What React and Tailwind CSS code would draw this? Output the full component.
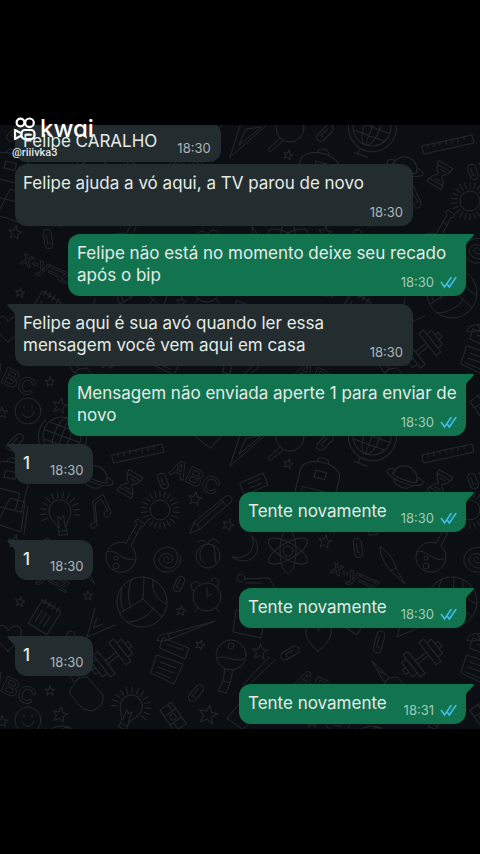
import React from 'react';
import clsx from 'clsx';

const messages = [
  { id: 1, text: 'Felipe CARALHO', time: '18:30', short: true },
  { id: 2, text: 'Felipe ajuda a vó aqui, a TV parou de novo', time: '18:30' },
  { id: 3, text: 'Felipe não está no momento deixe seu recado após o bip', time: '18:30', mine: true, tail: true },
  { id: 4, text: 'Felipe aqui é sua avó quando ler essa mensagem você vem aqui em casa', time: '18:30', tail: true },
  { id: 5, text: 'Mensagem não enviada aperte 1 para enviar de novo', time: '18:30', mine: true, tail: true },
  { id: 6, text: '1', time: '18:30', short: true, tail: true },
  { id: 7, text: 'Tente novamente', time: '18:30', short: true, mine: true, tail: true },
  { id: 8, text: '1', time: '18:30', short: true, tail: true },
  { id: 9, text: 'Tente novamente', time: '18:30', short: true, mine: true, tail: true },
  { id: 10, text: '1', time: '18:30', short: true, tail: true },
  { id: 11, text: 'Tente novamente', time: '18:31', short: true, mine: true, tail: true },
];

// x, y, radius, rotation
const stars = [
  [195, 79, 7, 10], [228, 105, 6, 20], [50, 271, 5, 0], [60, 295, 8, 12], [181, 191, 5, 8],
  [200, 225, 5, 20], [88, 176, 5, 0], [20, 182, 5, 10], [208, 295, 10, 12], [260, 232, 8, 5],
  [288, 44, 5, 15], [15, 122, 7, 10], [2, 302, 6, 0],
];

// x, y, length, rotation
const clips = [
  [163, 61, 16, -20], [179, 164, 16, 25], [196, 273, 19, 40], [290, 233, 20, 60],
  [48, 128, 19, -8], [15, 22, 20, 45], [69, 222, 22, 15],
];

const StarShape = () => (
  <path d="M0-10 2.6-3.4 9.5-3.1 4.1 1.3 5.9 8.1 0 4.2-5.9 8.1-4.1 1.3-9.5-3.1-2.6-3.4Z" vectorEffect="non-scaling-stroke" />
);

const Rays = ({ inner, outer, count, from = 0, sweep = 360 }) => (
  <>
    {Array.from({ length: count }, (_, i) => (
      <path key={i} d={`M0 ${-inner}V${-outer}`} transform={`rotate(${from + (i * sweep) / count})`} />
    ))}
  </>
);

const Bulb = ({ x, y, rotate }) => (
  <g transform={`translate(${x} ${y}) rotate(${rotate})`}>
    <path d="M-4 23V15C-5 11-11 7-11-1A11 11 0 0 1 11-1C11 7 5 11 4 15V23ZM-3 15V4L0 7 3 4V15M-4 19H4" />
    <Rays inner={14} outer={20} count={13} from={-108} sweep={234} />
  </g>
);

const Doodles = () => (
  <g id="doodles">
    {stars.map(([x, y, r, a]) => (
      <g key={`${x}-${y}`} transform={`translate(${x} ${y}) rotate(${a}) scale(${r / 10})`}><StarShape /></g>
    ))}
    {clips.map(([x, y, l, a]) => (
      <g key={`${x}-${y}`} transform={`translate(${x} ${y}) rotate(${a})`}>
        <rect x="-4" y={-l / 2} width="8" height={l} rx="4" />
        <path d={`M-1 ${-l / 4}V${l / 4}M1 ${l / 4}V${l / 5}`} />
      </g>
    ))}

    {/* globe */}
    <g transform="translate(62 16) rotate(20)">
      <circle r="19" />
      <ellipse rx="8" ry="19" />
      <path d="M0-19V19M-19 0H19M-16-9H16M-16 9H16M-21-10A24 24 0 1 0 16-18M-4 24V29M-8 30H6" />
    </g>

    {/* ruler */}
    <path d="M112 35 162 24 164 32 114 43ZM118 34V37M124 33V36M130 31V34M136 30V33M142 29V32M148 28V31M154 26V29" />

    {/* planet */}
    <g transform="translate(95 57) rotate(20)">
      <path d="M-12 0A12 11 0 0 1 12 0M-10 6A12 11 0 0 0 10 6" />
      <path d="M-12-4C-26-2-18 6 0 6S26-2 12-4M-12-1C-16 1-10 3 0 3S16 1 12-1" />
    </g>

    {/* hourglass */}
    <g transform="translate(130 64) rotate(30)">
      <path d="M-8-12H8V-8H-8ZM-8 8H8V12H-8ZM-7-8C-7-2-2-2-2 0S-7 2-7 8M7-8C7-2 2-2 2 0S7 2 7 8M-3-5H3M-3 5H3" />
    </g>

    {/* sun */}
    <g transform="translate(160 90)">
      <circle r="10" />
      <Rays inner={13} outer={19} count={22} />
    </g>

    {/* pencil */}
    <path d="M190 113 194 102 226 76C229 74 234 79 231 82L200 109ZM194 102 200 109M221 80 227 86M197 104 224 81" />

    {/* music note */}
    <path d="M93 81 103 74 111 92C111 98 104 99 104 94 104 91 107 91 108 91L101 79 95 84 97 104C96 110 89 109 91 104L95 102Z" />

    {/* flask */}
    <g transform="translate(120 137)">
      <path d="M6-14 17-33 15-36 18-38 25-33 23-30 21-31 11-11A15 15 0 1 1 6-14ZM-13-5C-5-10 3 6 14 2M13-26 17-23" />
      <circle cx="-4" cy="1" r="2" />
      <circle cx="-4" cy="9" r="3" />
    </g>

    {/* spiral */}
    <path transform="translate(167 139)" d="M2 0C2-3-3-3-3 1S5 5 6 0-3-8-7-2-2 10 4 9 13-4 8-9-8-12-12-4-9 12-2 13M-2 13C9 14 16 4 13-4" />

    {/* apple */}
    <g transform="translate(208 136)">
      <circle r="12" />
      <path d="M-4-10C-10-5-9 3-4 7M4-11C9-6 6 2 8 7M-10-14C-6-18-3-15 0-12M0-12C2-19 8-18 11-13" />
    </g>

    <Bulb x={60} y={92} rotate={-8} />
    <Bulb x={131} y={287} rotate={22} />

    {/* smiley */}
    <g transform="translate(28 300)">
      <circle r="13" />
      <path d="M-6 2C-4 8 4 8 6 1M-4-5V-3M4-5V-3" />
    </g>

    {/* volleyball */}
    <g transform="translate(142 182)">
      <circle r="25" />
      <path d="M1-3 2-25M1-3-22 11M1-3 20 15M-10-23C-15-14-14-2-11 6M11-22C10-14 12-4 24 2M-15 20C-5 20 8 14 11 6M-20-14C-22-6-22 2-18 9" />
    </g>

    {/* alarm clock */}
    <g transform="translate(207 177)">
      <circle r="14" />
      <path d="M0-9V0L5-3M-13-6C-20-10-14-20-7-13M4-15C5-23 16-18 10-10M-9 11-12 15M9 11 12 15" />
    </g>

    {/* paint brush */}
    <path d="M157 220C158 215 164 213 168 214L215 201 170 219C166 221 160 222 157 220ZM168 214 170 219" />

    {/* notebook */}
    <g transform="translate(45 197) rotate(32)">
      <path d="M-11-13H11V14H-11ZM-8-16V-10M-3-16V-10M2-16V-10M7-16V-10M-6-4V9M-1-4V9M4-4V9" />
    </g>

    {/* set squares */}
    <path d="M95 188 87 217 115 205M97 198 93 208 103 204M230 46 241 12 272 9ZM239 34 246 18 261 16Z" />

    {/* dumbbell */}
    <g transform="translate(112 238) rotate(-38)">
      <path d="M-7-2H7V2H-7ZM-13-14H-7V14H-13ZM-19-9H-13V9H-19ZM7-14H13V14H7ZM13-9H19V9H13ZM-23-3H-19V3H-23ZM19-3H23V3H19Z" />
    </g>

    {/* notes */}
    <path d="M163 218 189 228 185 239 160 228ZM167 224 183 230M157 235 183 244 174 264 151 253ZM160 242 176 248M158 247 174 253M156 252 170 258" />

    {/* glue bottle */}
    <path d="M71 268 79 258 87 257 103 275C104 285 97 289 92 291L83 289 70 274ZM62 241 74 262 79 258ZM67 250 75 254" />

    {/* eraser */}
    <g transform="translate(173 297) rotate(55)">
      <path d="M-13-7H13V7H-13ZM-5-7V7M5-7V7M-13-3H-5M5 3H13" />
      <circle r="3" />
    </g>

    {/* ping pong paddle */}
    <g transform="translate(231 235)">
      <circle r="15" />
      <circle cy="-9" r="3" />
      <path d="M-14 3C-6-1 4 8 13 4M-6 14-8 26-13 36-5 38-1 28 2 15M-8 26-1 28" />
    </g>

    {/* boxes and books */}
    <path d="M236 190 233 212 261 218 264 200ZM227 298 240 283 256 297 243 309ZM194 15 204 1 226 10 211 28ZM201 13C202 6 207 6 207 13L213 8" />
    <path d="M240 63 263 53 268 65 245 75ZM248 64 260 59M250 68 262 63M0 98 10 78 25 82 21 112 0 105M28 86 24 114" />

    {/* magnifier */}
    <circle cx="290" cy="17" r="14" />
    <path d="M280 27 268 38 270 41 283 30" />

    {/* backpack */}
    <g transform="translate(8 62) rotate(14)">
      <path d="M-20 26V-8C-20-24 20-24 20-8V26ZM-6-20C-6-26 6-26 6-20M-5-11H6V-4H-5ZM-14 26V8H14V26" />
    </g>

    {/* moon */}
    <path d="M252 116C266 128 252 150 232 137 246 140 257 130 252 116Z" />

    {/* atom */}
    <g transform="translate(288 131)">
      <circle r="5" />
      <ellipse rx="8" ry="22" />
      <ellipse rx="8" ry="22" transform="rotate(60)" />
      <ellipse rx="8" ry="22" transform="rotate(120)" />
    </g>

    {/* pen */}
    <path d="M70 127C77 130 84 140 86 148L95 164 81 151C75 145 70 135 70 127ZM81 151 86 148" />

    {/* heart */}
    <path d="M8 231C-4 222-8 208 0 206 5 204 8 209 8 211 10 207 18 203 21 209 23 217 16 225 8 231Z" />

    {/* scissors */}
    <circle cx="241" cy="158" r="4" />
    <path d="M245 159 269 158 275 168M246 163 262 163M243 265 270 236M252 262 275 240" />

    <g strokeWidth="0.8" className="font-['Liberation_Sans'] text-[24px] font-bold">
      <text transform="translate(168 53) rotate(26)">ABC</text>
      <text transform="translate(-16 263) rotate(26)">ABC</text>
      <text transform="translate(20 152) rotate(24)" className="text-[20px]">x-y=z</text>
    </g>
  </g>
);

const Wallpaper = () => (
  <svg aria-hidden="true" className="absolute inset-0 h-full w-full" fill="none" stroke="#23272a" strokeWidth="1" strokeLinecap="round" strokeLinejoin="round">
    <defs>
      <pattern id="wallpaper" x="0" y="295" width="310" height="309" patternUnits="userSpaceOnUse">
        <Doodles />
        <use href="#doodles" x="310" />
        <use href="#doodles" x="-310" />
        <use href="#doodles" y="309" />
        <use href="#doodles" y="-309" />
      </pattern>
    </defs>
    <rect width="100%" height="100%" fill="url(#wallpaper)" stroke="none" />
  </svg>
);

const Tail = ({ mine }) => (
  <svg
    aria-hidden="true"
    viewBox="0 0 20 12"
    className={clsx('absolute top-0 h-3 w-5', mine ? '-right-2 text-[#11744e]' : '-left-2 -scale-x-100 text-[#232d2f]')}
  >
    <path fill="currentColor" d="M0 0H18.5Q20.5 0 19.5 1.8L13 8.5Q12 10 12 12H0Z" />
  </svg>
);

const Ticks = () => (
  <svg role="img" aria-label="Lida" viewBox="0 0 17 13" className="h-[13px] w-[17px]" fill="none" stroke="#3fb9e4" strokeWidth="1.7">
    <path d="M1 6 4.5 11 11.5 1M7 8 9.3 11 16.2 1" />
  </svg>
);

const Message = ({ text, time, mine, short, tail }) => (
  <li className={clsx('flex', mine ? 'justify-end' : 'justify-start')}>
    <div
      className={clsx(
        'relative max-w-full rounded-xl pt-2 pb-1.5',
        mine ? 'bg-[#11744e] px-[9px]' : 'bg-[#232d2f] pr-2.5 pl-2',
        short ? 'flex items-end justify-between' : 'grid min-h-[62px] w-[398px]',
        short && (mine ? 'min-w-[227px] gap-2' : 'gap-5'),
        tail && (mine ? 'rounded-tr-none' : 'rounded-tl-none')
      )}
    >
      {tail && <Tail mine={mine} />}
      <p className={clsx('relative mb-1 text-[17px] leading-[22px] text-[#e4ebe9]', !short && 'col-start-1 row-start-1', text === '1' && 'font-medium')}>
        {text}
      </p>
      <div className={clsx('relative flex items-center gap-1.5 text-[13px] leading-4', !short && 'col-start-1 row-start-1 self-end justify-self-end', mine ? 'text-[#a3c7b7]' : 'text-[#aeb5b7]')}>
        <time>{time}</time>
        {mine && <Ticks />}
      </div>
    </div>
  </li>
);

const Watermark = () => (
  <div className="absolute top-[117px] left-3 text-white">
    <div className="flex items-center gap-1">
      <svg aria-hidden="true" viewBox="0 0 24 24" className="h-6 w-6" fill="none" stroke="currentColor" strokeWidth="2.2" strokeLinejoin="round">
        <circle cx="8.5" cy="5.5" r="3.9" />
        <circle cx="17.5" cy="5.8" r="4.3" />
        <rect x="9.5" y="13" width="13" height="9" rx="3.5" />
        <path d="M9.5 16.5 3 13V22L9.5 18.5M13.5 17.5H18.5" />
      </svg>
      <span className="text-[24px] leading-6 font-medium [font-feature-settings:'cv11']">kwai</span>
    </div>
    <p className="mt-1 font-['Roboto',sans-serif] text-[11px] leading-4 font-medium text-[#dfe3e4]">@riiivka3</p>
  </div>
);

const App = () => (
  <div className="relative min-h-screen bg-black pt-[125px] font-['Inter',sans-serif]">
    <main className="relative overflow-hidden bg-[#0b0f13] pr-3.5 pb-[5px] pl-[15px]">
      <Wallpaper />
      <ul className="relative -mt-[3px] flex flex-col gap-2 [&>li:first-child]:-mb-1.5">
        {messages.map((m) => (
          <Message key={m.id} {...m} />
        ))}
      </ul>
    </main>
    <Watermark />
  </div>
);

export default App;
